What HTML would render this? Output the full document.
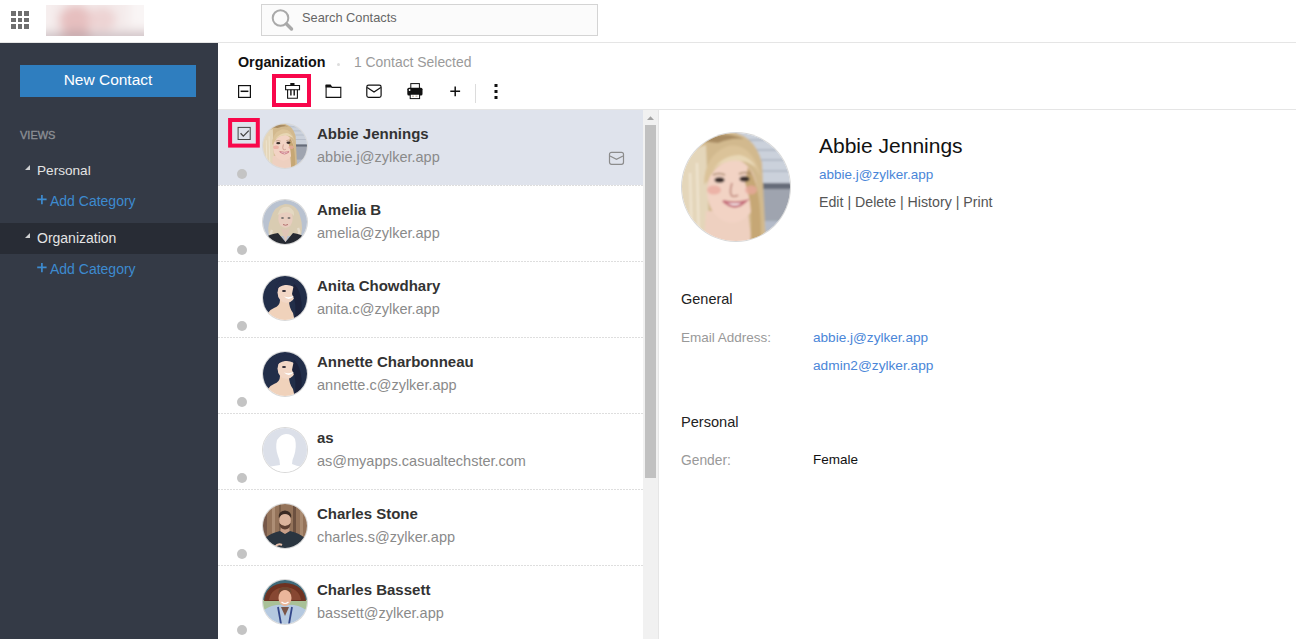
<!DOCTYPE html><html><head><meta charset="utf-8"><style>
*{box-sizing:border-box;margin:0;padding:0}
html,body{width:1296px;height:639px;overflow:hidden;background:#fff;font-family:"Liberation Sans",sans-serif;position:relative}
.a{position:absolute;white-space:nowrap}
.t{line-height:1}
#hdrline{left:0;top:42px;width:1296px;height:1px;background:#e5e5e5}
#logo{left:46px;top:5px;width:98px;height:31px;overflow:hidden;background:#f4eded}
#search{left:261px;top:4px;width:337px;height:32px;border:1px solid #d4d4d4;background:#fbfbfb}
#side{left:0;top:43px;width:218px;height:596px;background:#343a46}
#newc{left:20px;top:65px;width:176px;height:32px;background:#2f7ebf}
#tbline{left:218px;top:109px;width:1078px;height:1px;background:#e5e5e5}
.row{left:218px;width:425px;height:76px}
.row:after{content:"";position:absolute;left:0;right:0;bottom:0;height:1px;background:repeating-linear-gradient(90deg,#dedede 0 2px,transparent 2px 3px)}
.av{position:absolute;left:45px;top:14px;width:44px;height:44px;border-radius:50%;overflow:hidden;box-shadow:0 0 0 1px #d9d9d9}
.av svg{display:block}
.nm{position:absolute;left:99px;top:15px;font-size:15px;font-weight:bold;color:#333;line-height:18px}
.em{position:absolute;left:99px;top:39px;font-size:14.5px;color:#8a8a8a;line-height:17px}
.dot{position:absolute;left:19px;top:59px;width:10px;height:10px;border-radius:50%;background:#c4c4c4}
#sb{left:643px;top:110px;width:15px;height:529px;background:#f1f1f1}
#sbl{left:658px;top:110px;width:1px;height:529px;background:#e6e6e6}
#thumb{left:645px;top:125px;width:11px;height:353px;background:#c1c1c1}
.lbl{font-size:13.5px;color:#999}
.blue{color:#4a86d8}
</style></head><body>
<svg class="a" style="left:0;top:0" width="40" height="40"><g fill="#6e6e6e">
<rect x="11" y="11" width="5" height="5"/><rect x="18" y="11" width="4" height="5"/><rect x="24" y="11" width="5" height="5"/>
<rect x="11" y="18" width="5" height="4"/><rect x="18" y="18" width="4" height="4"/><rect x="24" y="18" width="5" height="4"/>
<rect x="11" y="24" width="5" height="5"/><rect x="18" y="24" width="4" height="5"/><rect x="24" y="24" width="5" height="5"/></g></svg>
<div class="a" id="logo"><svg width="98" height="31"><defs><filter id="lg" x="-20%" y="-40%" width="140%" height="180%"><feGaussianBlur stdDeviation="5"/></filter></defs><g filter="url(#lg)">
<rect x="-10" y="-10" width="118" height="51" fill="#f4ebeb"/>
<rect x="-10" y="-10" width="14" height="51" fill="#f7f0f0"/>
<ellipse cx="30" cy="15" rx="17" ry="15" fill="#e6bfbf"/>
<ellipse cx="56" cy="14" rx="14" ry="12" fill="#edd3d3"/>
<rect x="-10" y="27" width="118" height="12" fill="#cfc2c6"/>
<ellipse cx="30" cy="31" rx="18" ry="6" fill="#c7aaae"/>
<rect x="84" y="-10" width="24" height="32" fill="#f9f5f5"/>
</g></svg></div>
<div class="a" id="search"></div>
<svg class="a" style="left:270px;top:7px" width="28" height="28"><circle cx="10.5" cy="11" r="7.8" fill="none" stroke="#a9a9a9" stroke-width="2"/><line x1="16.5" y1="17" x2="21.5" y2="22" stroke="#a9a9a9" stroke-width="3.5" stroke-linecap="round"/></svg>
<div class="a t" style="left:302px;top:12.3px;font-size:12.8px;color:#666">Search Contacts</div>
<div class="a" id="hdrline"></div>
<div class="a" id="side"></div><div class="a" id="newc"></div>
<div class="a t" style="left:20px;width:176px;text-align:center;top:72.3px;font-size:15.5px;color:#fff">New Contact</div>
<div class="a t" style="left:20px;top:129.7px;font-size:11px;color:#8c8f94;-webkit-text-stroke:.35px #8c8f94">VIEWS</div>
<svg class="a" style="left:24px;top:164px" width="8" height="8"><path d="M6 1 L6 6 L1 6 Z" fill="#cfd0d2"/></svg>
<div class="a t" style="left:37px;top:163.6px;font-size:13.6px;color:#e4e4e4">Personal</div>
<svg class="a" style="left:37px;top:194px" width="12" height="12"><path d="M4.9 1v9.3M0.2 5.4h9.4" stroke="#3d8bd0" stroke-width="1.7"/></svg>
<div class="a t" style="left:50px;top:193.6px;font-size:14px;color:#3d8bd0">Add Category</div>
<div class="a" style="left:0;top:223px;width:218px;height:31px;background:#282c35"></div>
<svg class="a" style="left:24px;top:232px" width="8" height="8"><path d="M6 1 L6 6 L1 6 Z" fill="#cfd0d2"/></svg>
<div class="a t" style="left:37px;top:231.1px;font-size:14px;color:#e4e4e4">Organization</div>
<svg class="a" style="left:37px;top:262px" width="12" height="12"><path d="M4.9 1v9.3M0.2 5.4h9.4" stroke="#3d8bd0" stroke-width="1.7"/></svg>
<div class="a t" style="left:50px;top:261.6px;font-size:14px;color:#3d8bd0">Add Category</div>
<div class="a t" style="left:238px;top:54.8px;font-size:14.3px;font-weight:bold;color:#111">Organization</div>
<div class="a" style="left:336.5px;top:62.6px;width:3px;height:3px;border-radius:50%;background:#ddd"></div>
<div class="a t" style="left:354px;top:56px;font-size:13.9px;color:#9a9a9a">1 Contact Selected</div>
<svg class="a" style="left:230px;top:70px" width="290" height="40" fill="none" stroke="#111" stroke-width="1.2">
<rect x="8.6" y="15.6" width="11.8" height="11.8"/><line x1="10.6" y1="21.3" x2="18.4" y2="21.3" stroke-width="1.5"/>
<rect x="44" y="6" width="35" height="29" stroke="#f8074b" stroke-width="4"/>
<path d="M55.6 15.5h13.9v4.2h-13.9z" stroke-width="1.1"/><path d="M57.6 19.7v8.6h9.8v-8.6" stroke-width="1.1"/><path d="M60.9 19.8v5.8M64.2 19.8v5.8" stroke-width="1.4"/><rect x="60.3" y="13" width="4.2" height="2.4" fill="#111" stroke="none"/>
<path d="M96.1 15.1v12.3h14.7v-10h-9.3" stroke-width="1.1"/><path d="M95.6 14.5h5l2 3h-7z" fill="#111" stroke="none"/>
<rect x="136.8" y="15.1" width="14.3" height="12.2" rx="1.8" stroke-width="1.2"/><path d="M137.2 17.6l6.8 4.4l6.8-4.4" stroke-width="1.2"/>
<rect x="180.8" y="13.6" width="8.6" height="5" fill="#fff" stroke-width="1"/>
<rect x="177.3" y="17.8" width="15.2" height="7.8" rx="1.5" fill="#111" stroke="none"/>
<circle cx="179.6" cy="20" r=".9" fill="#fff" stroke="none"/>
<rect x="180.2" y="24.2" width="9.4" height="4.4" fill="#fff" stroke-width="1"/>
<rect x="182" y="25.6" width="2" height="1.2" fill="#c8b8a8" stroke="none"/><rect x="185.5" y="25.6" width="2" height="1.2" fill="#c8b8a8" stroke="none"/>
<path d="M225.2 16.4v9.8M220.3 21.3h9.8" stroke-width="1.5"/>
<line x1="245.5" y1="14" x2="245.5" y2="33" stroke="#dcdcdc" stroke-width="1"/>
<rect x="264.5" y="14" width="3" height="3" fill="#111" stroke="none"/><rect x="264.5" y="20" width="3" height="3" fill="#111" stroke="none"/><rect x="264.5" y="26" width="3" height="3" fill="#111" stroke="none"/>
</svg>
<div class="a" id="tbline"></div>
<div class="a row" style="top:110px;background:linear-gradient(#dfe3ec,#dfe3ec) 0 0/100% 75px no-repeat;"><div class="av"><svg viewBox="0 0 108 108" width="100%" height="100%"><defs><filter id="bAs" x="-10%" y="-10%" width="120%" height="120%"><feGaussianBlur stdDeviation="1"/></filter></defs>
<g filter="url(#bAs)">
<rect x="-5" y="-5" width="118" height="118" fill="#cdd2dc"/>
<rect x="62" y="-5" width="50" height="58" fill="#cbd1db"/>
<rect x="62" y="6" width="50" height="2" fill="#b3bac6"/><rect x="62" y="16" width="50" height="2" fill="#b3bac6"/><rect x="62" y="26" width="50" height="2" fill="#b3bac6"/><rect x="62" y="37" width="50" height="2" fill="#b3bac6"/>
<rect x="62" y="50" width="50" height="6" fill="#666c79"/><rect x="62" y="56" width="50" height="32" fill="#9fa4af"/><rect x="62" y="88" width="50" height="25" fill="#b4bbc9"/>
<path d="M-5 113 L-5 30 Q4 0 40 -2 Q72 -2 80 30 L84 113 Z" fill="#d2b98e"/>
<path d="M18 8 Q40 -4 62 6 Q50 4 36 10 Z" fill="#a88b62"/>
<path d="M-2 40 Q6 16 24 12 L28 113 L0 113 Z" fill="#e4d6ba"/>
<path d="M8 40 L10 110 M15 30 L17 110" stroke="#f0e6d2" stroke-width="2" fill="none"/>
<path d="M24 78 L66 78 L70 113 L22 113 Z" fill="#eed0c0"/>
<ellipse cx="50" cy="58" rx="25" ry="32" fill="#f2d3c4"/>
<path d="M22 52 Q22 22 46 13 Q70 9 79 44 Q72 30 58 27 Q40 25 29 42 Q25 48 22 52 Z" fill="#dbc399"/>
<path d="M30 38 Q40 22 58 22 Q68 24 74 34 Q62 26 48 28 Q36 30 30 38Z" fill="#e8d7b5"/>
<path d="M66 34 Q80 50 79 113 L68 113 Q72 72 63 50 Z" fill="#c6a774"/>
<ellipse cx="32" cy="57" rx="7" ry="4.5" fill="#e9a89e" opacity=".75"/><ellipse cx="69" cy="57" rx="6" ry="4.5" fill="#e9a89e" opacity=".75"/>
<path d="M31 42 Q37 39 43 42 M57 41 Q63 38 69 41" stroke="#a7876a" stroke-width="1.5" fill="none"/>
<ellipse cx="37.5" cy="47" rx="5" ry="2.8" fill="#3a2e2c"/><ellipse cx="62.5" cy="46" rx="5" ry="2.8" fill="#3a2e2c"/>
<path d="M50 50 Q47 60 50 63 Q54 64 56 62" stroke="#c9978a" stroke-width="2" fill="none"/>
<path d="M41 68 Q53 79 64 68 Q53 71 41 68Z" fill="#fff" stroke="#c66f7b" stroke-width="2.2"/>
</g></svg></div><div class="nm">Abbie Jennings</div><div class="em">abbie.j@zylker.app</div><div class="dot"></div></div>
<div class="a row" style="top:186px;"><div class="av"><svg viewBox="0 0 44 44" width="100%" height="100%"><defs><filter id="bB"><feGaussianBlur stdDeviation=".55"/></filter></defs><g filter="url(#bB)">
<rect x="-2" y="-2" width="48" height="48" fill="#b9c2d0"/>
<path d="M7 38 Q3 28 8 18 Q11 6 22 4 Q34 4 37 16 Q41 28 37 38 L30 36 L14 36 Z" fill="#d9ccb2"/>
<path d="M9 30 Q6 36 11 38 M35 28 Q38 34 34 37" stroke="#e6dccb" stroke-width="2.5" fill="none"/>
<ellipse cx="22.5" cy="18.5" rx="7.2" ry="9.5" fill="#e8cdbf"/>
<path d="M14.5 15 Q17 5 26 7 Q32 10 31 16 Q25 9 14.5 15Z" fill="#e4d8c2"/>
<ellipse cx="19.5" cy="18" rx="1.5" ry=".8" fill="#555"/><ellipse cx="26" cy="18" rx="1.5" ry=".8" fill="#555"/>
<path d="M20 24.5 Q22.5 26 25 24.5" stroke="#b56f6f" stroke-width="1" fill="none"/>
<path d="M-2 46 L1 38 Q7 34 15 33 L22.5 42 L30 33 Q38 34 43 38 L46 46 Z" fill="#262a31"/>
<path d="M18 28 L22.5 42 L27 28 Q22.5 31 18 28Z" fill="#dfc5b7"/>
</g></svg></div><div class="nm">Amelia B</div><div class="em">amelia@zylker.app</div><div class="dot"></div></div>
<div class="a row" style="top:262px;"><div class="av"><svg viewBox="0 0 44 44" width="100%" height="100%"><defs><filter id="bC"><feGaussianBlur stdDeviation=".5"/></filter></defs><g filter="url(#bC)">
<rect x="-2" y="-2" width="48" height="48" fill="#33446a"/>
<path d="M-2 46 L-2 12 Q8 -3 26 -1 Q42 4 46 22 L46 46 Z" fill="#222d49"/>
<path d="M3 46 Q3 35 11 32 Q17 30 17 24 L26 24 Q26 32 30 37 L32 46 Z" fill="#f0d2bb"/>
<ellipse cx="23.5" cy="16.5" rx="9" ry="10.5" fill="#f2d7c6"/>
<path d="M12 15 Q13 2 26 2.5 Q35 5 35 15 Q30 8 22 9 Q16 10 12 15Z" fill="#222d49"/>
<path d="M31 8 Q41 16 38 46 L31 46 Q35 28 29 18Z" fill="#1b243b"/>
<path d="M21 20.5 Q26 25.5 31 20 Q26 22 21 20.5Z" fill="#fff"/>
<ellipse cx="21" cy="15" rx="2" ry=".9" fill="#2b2630"/>
</g></svg></div><div class="nm">Anita Chowdhary</div><div class="em">anita.c@zylker.app</div><div class="dot"></div></div>
<div class="a row" style="top:338px;"><div class="av"><svg viewBox="0 0 44 44" width="100%" height="100%"><defs><filter id="bC2"><feGaussianBlur stdDeviation=".5"/></filter></defs><g filter="url(#bC2)">
<rect x="-2" y="-2" width="48" height="48" fill="#33446a"/>
<path d="M-2 46 L-2 12 Q8 -3 26 -1 Q42 4 46 22 L46 46 Z" fill="#222d49"/>
<path d="M3 46 Q3 35 11 32 Q17 30 17 24 L26 24 Q26 32 30 37 L32 46 Z" fill="#f0d2bb"/>
<ellipse cx="23.5" cy="16.5" rx="9" ry="10.5" fill="#f2d7c6"/>
<path d="M12 15 Q13 2 26 2.5 Q35 5 35 15 Q30 8 22 9 Q16 10 12 15Z" fill="#222d49"/>
<path d="M31 8 Q41 16 38 46 L31 46 Q35 28 29 18Z" fill="#1b243b"/>
<path d="M21 20.5 Q26 25.5 31 20 Q26 22 21 20.5Z" fill="#fff"/>
<ellipse cx="21" cy="15" rx="2" ry=".9" fill="#2b2630"/>
</g></svg></div><div class="nm">Annette Charbonneau</div><div class="em">annette.c@zylker.app</div><div class="dot"></div></div>
<div class="a row" style="top:414px;"><div class="av"><svg viewBox="0 0 44 44" width="100%" height="100%"><defs><filter id="bD"><feGaussianBlur stdDeviation=".4"/></filter></defs><g filter="url(#bD)">
<rect width="44" height="44" fill="#dce0e9"/>
<path d="M17 37 Q17 32 15 28 Q12 20 14 12 Q18 6 23 6 Q29 6 32 11 Q34 19 31 28 Q29 32 29 36 Q33 38 40 39 L44 44 L0 44 L4 39 Q11 38 17 37Z" fill="#fff"/>
</g></svg></div><div class="nm">as</div><div class="em">as@myapps.casualtechster.com</div><div class="dot"></div></div>
<div class="a row" style="top:490px;"><div class="av"><svg viewBox="0 0 44 44" width="100%" height="100%"><defs><filter id="bE"><feGaussianBlur stdDeviation=".6"/></filter></defs><g filter="url(#bE)">
<rect x="-2" y="-2" width="48" height="48" fill="#94735a"/>
<rect x="0" y="-2" width="4" height="48" fill="#76594a"/><rect x="9" y="-2" width="3" height="48" fill="#ad8e74"/><rect x="16" y="-2" width="2" height="48" fill="#7b5e4a"/><rect x="30" y="-2" width="3" height="48" fill="#6d5140"/><rect x="37" y="-2" width="3" height="48" fill="#a98a70"/>
<path d="M18 22 L26 22 L27 30 L17 30Z" fill="#c99f88"/>
<path d="M-2 46 L2 34 Q8 29 17 27 L22 30 L27 27 Q36 29 42 34 L46 46Z" fill="#2a3440"/>
<ellipse cx="22" cy="16.5" rx="5.8" ry="7.5" fill="#dcb49c"/>
<path d="M15.8 14 Q15 7 22 6.5 Q29 7 28.2 14 Q26 10 22 10 Q18 10 15.8 14Z" fill="#3a2921"/>
<path d="M16.2 19 Q17 25.5 22 25.5 Q27 25.5 27.8 19 Q25 22 22 22 Q19 22 16.2 19Z" fill="#5e4031"/>
<path d="M12 43 Q15 39 19 41" stroke="#e7c0aa" stroke-width="2" fill="none"/>
</g></svg></div><div class="nm">Charles Stone</div><div class="em">charles.s@zylker.app</div><div class="dot"></div></div>
<div class="a row" style="top:566px;"><div class="av"><svg viewBox="0 0 44 44" width="100%" height="100%"><defs><filter id="bF"><feGaussianBlur stdDeviation=".6"/></filter></defs><g filter="url(#bF)">
<rect x="-2" y="-2" width="48" height="48" fill="#a9c197"/>
<rect x="-2" y="-2" width="48" height="22" fill="#3f6a7a"/>
<path d="M1 21 Q3 4 22 3 Q41 4 43 21Z" fill="#6e3320"/>
<path d="M6 20 Q8 8 22 7 Q36 8 38 20Z" fill="#874730"/>
<path d="M-2 46 L1 30 Q9 24 22 25 Q35 24 43 30 L46 46Z" fill="#b5c9e0"/>
<path d="M18 27 L22 36 L26 27Z" fill="#7a5546"/>
<path d="M15 27 L18 44 M29 27 L26 44" stroke="#33478a" stroke-width="1.8"/>
<ellipse cx="22" cy="18" rx="6.5" ry="8.2" fill="#eab69b"/>
<path d="M15.5 14 Q15 7 22 7 Q29 7 28.5 14 Q26 10 22 10 Q18 10 15.5 14Z" fill="#6e4630"/>
<path d="M18.5 22 Q22 25 25.5 22" stroke="#fff" stroke-width="1.2" fill="none"/>
</g></svg></div><div class="nm">Charles Bassett</div><div class="em">bassett@zylker.app</div><div class="dot"></div></div>
<svg class="a" style="left:225px;top:114px" width="40" height="40" fill="none">
<rect x="5.1" y="6" width="27.7" height="25.6" stroke="#f8074b" stroke-width="4"/>
<rect x="13.1" y="13.4" width="12.1" height="12.1" stroke="#444" stroke-width="1"/>
<path d="M15.6 19.2l2.7 2.9l5.5-5.5" stroke="#444" stroke-width="1.3"/>
</svg>
<svg class="a" style="left:605px;top:148px" width="24" height="20" fill="none"><rect x="4.5" y="4.3" width="14" height="12" rx="2" stroke="#8c8c8c" stroke-width="1.2"/><path d="M5 8l6.5 3.3l6.5-3.3" stroke="#8c8c8c" stroke-width="1.2"/></svg>
<div class="a" id="sb"></div><div class="a" id="sbl"></div><div class="a" id="thumb"></div>
<svg class="a" style="left:645px;top:114px" width="12" height="8"><path d="M2 6L5.5 2.2L9 6Z" fill="#a3a3a3"/></svg>
<div class="a" style="left:682px;top:133px;width:108px;height:108px;border-radius:50%;overflow:hidden;box-shadow:0 0 0 1px #d8d8d8"><svg viewBox="0 0 108 108" width="100%" height="100%"><defs><filter id="bA" x="-10%" y="-10%" width="120%" height="120%"><feGaussianBlur stdDeviation="1"/></filter></defs>
<g filter="url(#bA)">
<rect x="-5" y="-5" width="118" height="118" fill="#cdd2dc"/>
<rect x="62" y="-5" width="50" height="58" fill="#cbd1db"/>
<rect x="62" y="6" width="50" height="2" fill="#b3bac6"/><rect x="62" y="16" width="50" height="2" fill="#b3bac6"/><rect x="62" y="26" width="50" height="2" fill="#b3bac6"/><rect x="62" y="37" width="50" height="2" fill="#b3bac6"/>
<rect x="62" y="50" width="50" height="6" fill="#666c79"/><rect x="62" y="56" width="50" height="32" fill="#9fa4af"/><rect x="62" y="88" width="50" height="25" fill="#b4bbc9"/>
<path d="M-5 113 L-5 30 Q4 0 40 -2 Q72 -2 80 30 L84 113 Z" fill="#d2b98e"/>
<path d="M18 8 Q40 -4 62 6 Q50 4 36 10 Z" fill="#a88b62"/>
<path d="M-2 40 Q6 16 24 12 L28 113 L0 113 Z" fill="#e4d6ba"/>
<path d="M8 40 L10 110 M15 30 L17 110" stroke="#f0e6d2" stroke-width="2" fill="none"/>
<path d="M24 78 L66 78 L70 113 L22 113 Z" fill="#eed0c0"/>
<ellipse cx="50" cy="58" rx="25" ry="32" fill="#f2d3c4"/>
<path d="M22 52 Q22 22 46 13 Q70 9 79 44 Q72 30 58 27 Q40 25 29 42 Q25 48 22 52 Z" fill="#dbc399"/>
<path d="M30 38 Q40 22 58 22 Q68 24 74 34 Q62 26 48 28 Q36 30 30 38Z" fill="#e8d7b5"/>
<path d="M66 34 Q80 50 79 113 L68 113 Q72 72 63 50 Z" fill="#c6a774"/>
<ellipse cx="32" cy="57" rx="7" ry="4.5" fill="#e9a89e" opacity=".75"/><ellipse cx="69" cy="57" rx="6" ry="4.5" fill="#e9a89e" opacity=".75"/>
<path d="M31 42 Q37 39 43 42 M57 41 Q63 38 69 41" stroke="#a7876a" stroke-width="1.5" fill="none"/>
<ellipse cx="37.5" cy="47" rx="5" ry="2.8" fill="#3a2e2c"/><ellipse cx="62.5" cy="46" rx="5" ry="2.8" fill="#3a2e2c"/>
<path d="M50 50 Q47 60 50 63 Q54 64 56 62" stroke="#c9978a" stroke-width="2" fill="none"/>
<path d="M41 68 Q53 79 64 68 Q53 71 41 68Z" fill="#fff" stroke="#c66f7b" stroke-width="2.2"/>
</g></svg></div>
<div class="a t" style="left:819px;top:135px;font-size:21px;color:#111">Abbie Jennings</div>
<div class="a t blue" style="left:819px;top:167.6px;font-size:13.5px">abbie.j@zylker.app</div>
<div class="a t" style="left:819px;top:195.1px;font-size:14.2px;color:#555">Edit | Delete | History | Print</div>
<div class="a t" style="left:681px;top:291.5px;font-size:14.5px;color:#222">General</div>
<div class="a t lbl" style="left:681px;top:330.8px">Email Address:</div>
<div class="a t blue" style="left:813px;top:330.8px;font-size:13.6px">abbie.j@zylker.app</div>
<div class="a t blue" style="left:813px;top:358.9px;font-size:13.7px">admin2@zylker.app</div>
<div class="a t" style="left:681px;top:414.6px;font-size:14.6px;color:#222">Personal</div>
<div class="a t lbl" style="left:681px;top:453.9px;font-size:13.8px">Gender:</div>
<div class="a t" style="left:813px;top:453.3px;font-size:13.5px;color:#111">Female</div>
</body></html>
